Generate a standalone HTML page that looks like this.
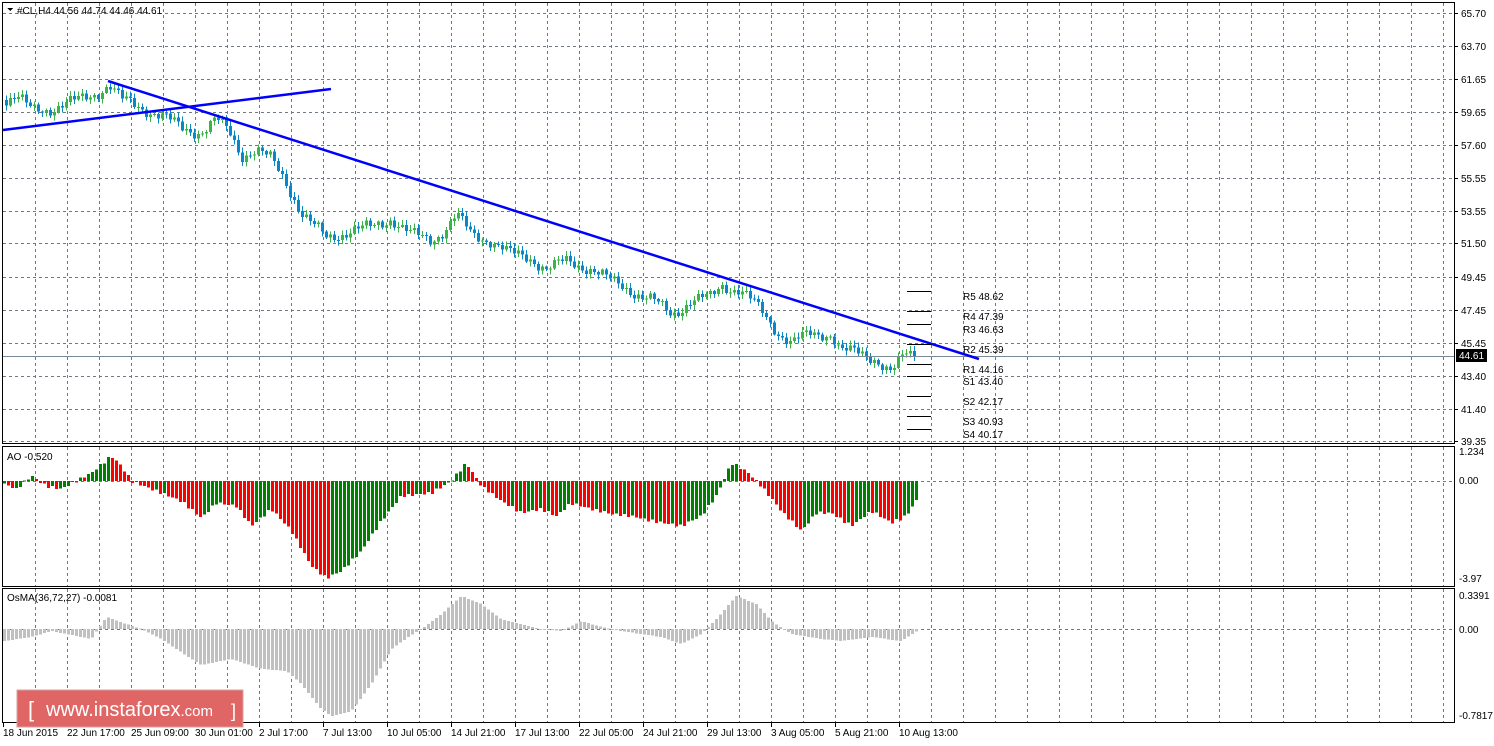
<!DOCTYPE html>
<html><head><meta charset="utf-8">
<style>
html,body{margin:0;padding:0;background:#fff;}
body{width:1494px;height:741px;overflow:hidden;}
svg text{font-family:"Liberation Sans",sans-serif;font-size:10px;fill:#000;}
</style></head>
<body>
<svg id="s" width="1494" height="741" xmlns="http://www.w3.org/2000/svg" shape-rendering="crispEdges">
<g id="grid" stroke="#6f7886" stroke-width="1" stroke-dasharray="3,3"></g>
<g id="bars"></g>
<g fill="none" stroke="#000" stroke-width="1">
<rect x="2.5" y="2.5" width="1452" height="441"/>
<rect x="2.5" y="446.5" width="1452" height="140"/>
<rect x="2.5" y="588.5" width="1452" height="134"/>
</g>
<line x1="3" y1="356.5" x2="1454" y2="356.5" stroke="#7a8a98"/>
<g stroke="#0000ff" stroke-width="2.5" shape-rendering="auto">
<line x1="3" y1="130" x2="331" y2="89"/>
<line x1="108" y1="81" x2="979" y2="359"/>
</g>
<g stroke="#000" stroke-width="1">
<line x1="907" y1="291.5" x2="931" y2="291.5"/>
<line x1="907" y1="311.5" x2="931" y2="311.5"/>
<line x1="907" y1="324.5" x2="931" y2="324.5"/>
<line x1="907" y1="344.5" x2="931" y2="344.5"/>
<line x1="907" y1="364.5" x2="931" y2="364.5"/>
<line x1="907" y1="376.5" x2="931" y2="376.5"/>
<line x1="907" y1="396.5" x2="931" y2="396.5"/>
<line x1="907" y1="416.5" x2="931" y2="416.5"/>
<line x1="907" y1="429.5" x2="931" y2="429.5"/>
</g>
<g>
<text x="963" y="300">R5 48.62</text>
<text x="963" y="320">R4 47.39</text>
<text x="963" y="333">R3 46.63</text>
<text x="963" y="353">R2 45.39</text>
<text x="963" y="373">R1 44.16</text>
<text x="963" y="385">S1 43.40</text>
<text x="963" y="405">S2 42.17</text>
<text x="963" y="425">S3 40.93</text>
<text x="963" y="438">S4 40.17</text>
</g>
<path d="M7 8 L13 8 L10 11 Z" fill="#000"/>
<text x="17" y="14">#CL,H4  44.56 44.74 44.46 44.61</text>
<text x="7" y="460">AO -0.520</text>
<text x="7" y="601">OsMA(36,72,27) -0.0081</text>
<g id="axis"></g>
<rect x="1456" y="349" width="31" height="13" fill="#000"/>
<text x="1459" y="359" style="fill:#fff">44.61</text>
<g id="time"></g>
<rect x="17" y="690" width="226" height="37" fill="#e06666" stroke="#d8a0a0"/>
<text x="28" y="717" style="fill:#fff;font-size:22px">[</text>
<text x="46" y="716" style="fill:#fff;font-size:20px">www.instaforex<tspan style="font-size:15px">.com</tspan></text>
<text x="231" y="717" style="fill:#fff;font-size:18px">]</text>
</svg>
<script>
(function(){
var NS="http://www.w3.org/2000/svg";
function el(p,t,a,txt){var e=document.createElementNS(NS,t);for(var k in a)e.setAttribute(k,a[k]);if(txt!=null)e.textContent=txt;p.appendChild(e);return e;}
var grid=document.getElementById('grid'),bars=document.getElementById('bars'),axis=document.getElementById('axis'),time=document.getElementById('time');
for(var x=35;x<1454;x+=32){
 el(grid,'line',{x1:x+.5,y1:3,x2:x+.5,y2:443});
 el(grid,'line',{x1:x+.5,y1:447,x2:x+.5,y2:586});
 el(grid,'line',{x1:x+.5,y1:589,x2:x+.5,y2:722});
}
var hy=[13,46,79,112,145,178,211,243,277,310,343,376,409,441];
var hl=["65.70","63.70","61.65","59.65","57.60","55.55","53.55","51.50","49.45","47.45","45.45","43.40","41.40","39.35"];
for(var i=0;i<hy.length;i++){
 el(grid,'line',{x1:3,y1:hy[i]+.5,x2:1454,y2:hy[i]+.5});
 el(axis,'line',{x1:1455,y1:hy[i]+.5,x2:1458,y2:hy[i]+.5,stroke:'#000'});
 el(axis,'text',{x:1461,y:hy[i]+4},hl[i]);
}
el(grid,'line',{x1:3,y1:481.5,x2:1454,y2:481.5});
el(grid,'line',{x1:3,y1:629.5,x2:1454,y2:629.5});
[[455,"1.234"],[484,"0.00"],[582,"-3.97"],[599,"0.3391"],[633,"0.00"],[719,"-0.7817"]].forEach(function(a){el(axis,'text',{x:1459,y:a[0]},a[1]);});
var tl=["18 Jun 2015","22 Jun 17:00","25 Jun 09:00","30 Jun 01:00","2 Jul 17:00","7 Jul 13:00","10 Jul 05:00","14 Jul 21:00","17 Jul 13:00","22 Jul 05:00","24 Jul 21:00","29 Jul 13:00","3 Aug 05:00","5 Aug 21:00","10 Aug 13:00"];
for(var i=0;i<tl.length;i++){var tx=3+64*i;el(time,'line',{x1:tx+.5,y1:723,x2:tx+.5,y2:727,stroke:'#000'});el(time,'text',{x:tx,y:736},tl[i]);}
function interp(pts,x){if(x<=pts[0][0])return pts[0][1];for(var i=1;i<pts.length;i++){if(x<=pts[i][0]){var a=pts[i-1],b=pts[i];return a[1]+(b[1]-a[1])*(x-a[0])/(b[0]-a[0]);}}return pts[pts.length-1][1];}
var P=[[5,100],[15,97],[30,110],[50,108],[70,103],[90,95],[108,85],[120,100],[140,107],[160,116],[180,128],[200,132],[215,120],[230,135],[240,155],[255,150],[270,160],[285,182],[300,212],[310,224],[325,238],[335,235],[350,230],[370,228],[390,218],[410,235],[430,240],[445,228],[455,215],[470,235],[490,240],[510,255],[530,258],[545,268],[565,262],[590,268],[610,282],[630,290],[650,300],[670,315],[690,300],[710,298],[720,285],[740,290],[760,312],[775,330],[790,342],[810,335],[830,333],[840,350],[860,355],[875,358],[890,372],[905,355],[915,356]];
var prev=interp(P,1);
for(var x=5;x<=915;x+=4){
 var c=interp(P,x)+5*Math.sin(x*1.7)+3*Math.sin(x*0.53);
 var o=prev;prev=c;
 var tp=Math.min(o,c),bt=Math.max(o,c);if(bt-tp<1)bt=tp+1;
 var col=c<o?'#3db34a':'#0b86c6';
 var wt=tp-1-Math.abs(4*Math.sin(x*2.3)),wb=bt+1+Math.abs(4*Math.cos(x*1.9));
 el(bars,'line',{x1:x+1.5,y1:wt,x2:x+1.5,y2:wb,stroke:col});
 el(bars,'rect',{x:x,y:tp,width:3,height:bt-tp,fill:col});
}
var A=[[3,-3],[15,-8],[30,5],[45,-5],[60,-8],[75,0],[90,8],[110,25],[120,15],[130,0],[150,-8],[180,-20],[200,-37],[215,-22],[235,-25],[250,-45],[270,-28],[290,-50],[310,-85],[325,-97],[340,-90],[360,-70],[380,-40],[400,-15],[430,-12],[450,0],[465,18],[480,-5],[500,-20],[520,-32],[540,-28],[555,-35],[570,-22],[590,-28],[610,-33],[630,-35],[650,-40],[680,-45],[700,-35],[715,-15],[730,18],[745,10],[760,-5],[780,-30],[800,-50],[815,-32],[830,-32],[850,-45],[870,-30],[890,-42],[905,-35],[916,-18]];
var pa=null;
for(var x=3;x<=915;x+=4){
 var v=interp(A,x)+1.5*Math.sin(x*0.9);
 var col=(pa===null||v>=pa)?'#008000':'#ff0000';pa=v;
 el(bars,'rect',{x:x,y:Math.min(481,481-v),width:3,height:Math.max(1,Math.abs(v)),fill:col});
}
var O=[[3,-12],[30,-8],[50,-2],[70,-6],[90,-10],[105,12],[125,5],[140,0],[160,-10],[190,-30],[200,-36],[230,-30],[260,-40],[285,-42],[300,-55],[320,-80],[330,-87],[350,-82],[370,-55],[390,-20],[410,-6],[420,0],[440,15],[460,33],[480,25],[500,10],[520,5],[540,0],[560,-2],[580,8],[600,2],[620,-2],[640,-5],[660,-8],[680,-15],[700,-5],[715,10],[735,33],[755,25],[770,8],[790,-5],[820,-10],[840,-12],[870,-8],[900,-12],[916,-2]];
for(var x=3;x<=915;x+=4){
 var v=interp(O,x);
 el(bars,'rect',{x:x,y:Math.min(629,629-v),width:3,height:Math.max(1,Math.abs(v)),fill:'#c0c0c0'});
}
})();
</script>
</body></html>
